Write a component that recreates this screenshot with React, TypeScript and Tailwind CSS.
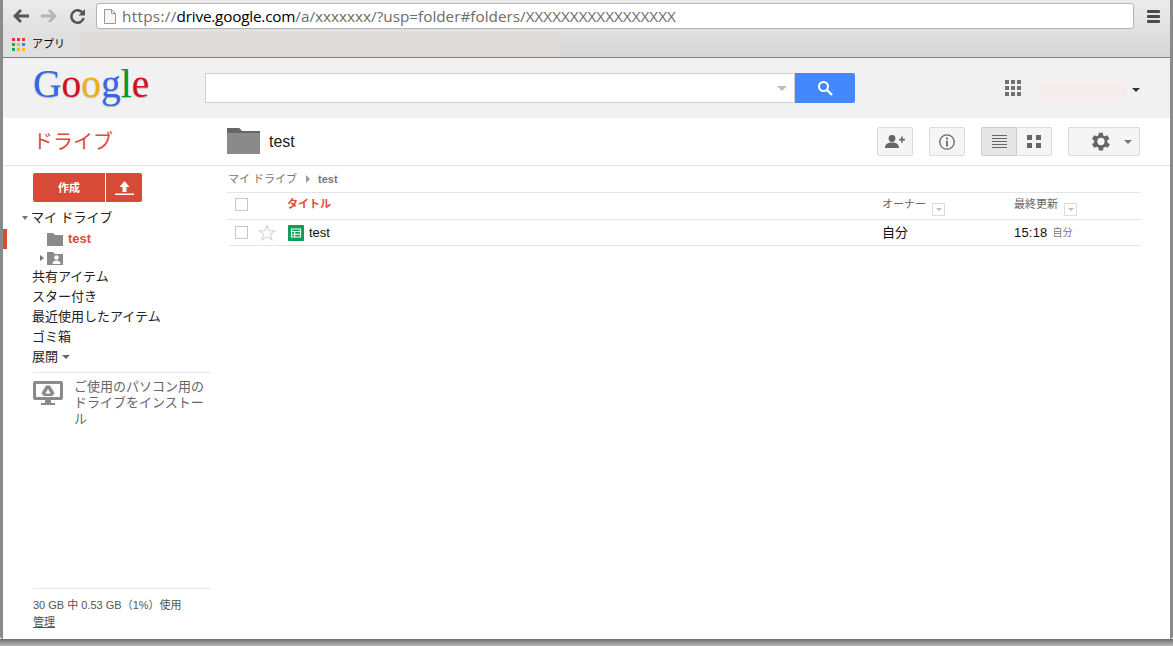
const font = { fontFamily: '"Liberation Sans", "Noto Sans CJK JP", sans-serif' };

function Caret({ className }: { className: string }) {
  return <span className={`inline-block h-0 w-0 border-x-[4px] border-t-[4px] border-x-transparent ${className}`} />;
}

function ChromeBar() {
  return (
    <div className="h-[58px] shrink-0 border-b border-[#7f7f7f] bg-gradient-to-b from-[#ececec] to-[#d6d6d6]">
      <div className="flex h-[32px] items-center pl-[9px] pr-[10px]">
        <svg width="18" height="16" viewBox="0 0 18 16" className="mr-[10px]">
          <path d="M9 2 3 8l6 6M3.500 8H17" fill="none" stroke="#555" strokeWidth="2.800" />
        </svg>
        <svg width="18" height="16" viewBox="0 0 18 16" className="mr-[11px]">
          <path d="m9 2 6 6-6 6M14.500 8H1" fill="none" stroke="#b4b4b4" strokeWidth="2.800" />
        </svg>
        <svg width="17" height="17" viewBox="0 0 17 17" className="mr-[10px]">
          <path d="M14 5.500A6.200 6.200 0 1 0 14.600 10" fill="none" stroke="#555" strokeWidth="2.600" />
          <path d="M16 1v6.500H9.500z" fill="#555" />
        </svg>
        <div
          className="flex h-[26px] flex-1 items-center rounded-[3px] border border-[#b4b4b4] bg-white pl-[7px] text-[15.3px] text-[#6b6b6b]"
          style={{ fontFamily: '"Open Sans", sans-serif' }}
        >
          <svg width="12" height="15" viewBox="0 0 12 15" className="mr-[6px]">
            <path d="M.5.500h7l4 4v10H.5z" fill="#f6f6f6" stroke="#999" />
            <path d="M7.500.500v4h4" fill="none" stroke="#999" />
          </svg>
          <span>
            <span className="tracking-[0.3px]">https://</span>
            <span className="tracking-[-0.2px] text-black">drive.google.com</span>/a/xxxxxxx/?usp=folder#folders/XXXXXXXXXXXXXXXXX
          </span>
        </div>
        <div className="ml-[13px] flex w-[13px] flex-col gap-[2px]">
          <span className="h-[3px] rounded-[1px] bg-[#4a4a4a]" />
          <span className="h-[3px] rounded-[1px] bg-[#4a4a4a]" />
          <span className="h-[3px] rounded-[1px] bg-[#4a4a4a]" />
        </div>
      </div>
      <div className="flex h-[25px] items-stretch">
        <div className="flex w-[77px] items-center bg-[#e0e0e0] pl-[9px] text-[11px] text-black">
          <span className="mr-[7px] grid grid-cols-3 gap-[2px]">
            {['#e33', '#e33', '#e33', '#3a3', '#fb0', '#38e', '#1a5', '#fb0', '#fb0'].map((c, i) => (
              <span key={i} className="h-[3px] w-[3px]" style={{ backgroundColor: c }} />
            ))}
          </span>
          アプリ
        </div>
        <div className="w-[480px] bg-[#dedbd9]" />
      </div>
    </div>
  );
}

function GoogleHeader() {
  return (
    <div className="flex h-[60px] shrink-0 items-start bg-[#f1f1f1]">
      <div
        className="ml-[30px] w-[172px] text-[39.5px] leading-[52px] [text-shadow:0_1px_1px_rgba(0,0,0,0.25)]"
        style={{ fontFamily: '"Liberation Serif", serif' }}
      >
        <span className="text-[#3369e8]">G</span>
        <span className="text-[#d50f25]">o</span>
        <span className="text-[#eeb211]">o</span>
        <span className="text-[#3369e8]">g</span>
        <span className="text-[#009925]">l</span>
        <span className="text-[#d50f25]">e</span>
      </div>
      <div className="mt-[15px] flex h-[30px] w-[650px]">
        <div className="flex flex-1 items-center justify-end border border-[#d0d0d0] bg-white pr-[7px]">
          <Caret className="border-t-[#bdbdbd] !border-x-[5px] !border-t-[5px]" />
        </div>
        <div className="flex w-[60px] items-center justify-center rounded-r-[2px] bg-[#4387fd]">
          <svg width="16" height="16" viewBox="0 0 16 16">
            <circle cx="6.500" cy="6.500" r="4.500" fill="none" stroke="#fff" strokeWidth="2" />
            <path d="m10 10 5 5" stroke="#fff" strokeWidth="2.400" />
          </svg>
        </div>
      </div>
      <div className="ml-[150px] mt-[22px] grid grid-cols-3 gap-[2px]">
        {Array.from({ length: 9 }).map((_, i) => (
          <span key={i} className="h-[4px] w-[4px] bg-[#707070]" />
        ))}
      </div>
      <div className="ml-[19px] mt-[24px] h-[17px] w-[87px] bg-[#f5edeb]" />
      <Caret className="ml-[5px] mt-[30px] border-t-[#333]" />
    </div>
  );
}

function ToolButton({ children, className }: { children: React.ReactNode; className: string }) {
  return (
    <div className={`flex h-[29px] items-center justify-center rounded-[2px] border border-[#dcdcdc] bg-[#f5f5f5] ${className}`}>
      {children}
    </div>
  );
}

function ActionBar() {
  return (
    <div className="flex h-[48px] shrink-0 items-center border-b border-[#e5e5e5] bg-white">
      <div className="w-[224px] pl-[30px] text-[20px] text-[#dd4b39]">ドライブ</div>
      <svg width="33" height="26" viewBox="0 0 33 26" className="mb-[2px]">
        <path d="M0 0h12l3 3h18v23H0z" fill="#8a8a8a" />
        <path d="M0 0h12l3 3h18v2H0z" fill="#666" />
      </svg>
      <span className="ml-[9px] flex-1 text-[16px] text-[#222]">test</span>
      <ToolButton className="w-[36px]">
        <svg width="20" height="13" viewBox="0 0 20 13" fill="#666">
          <circle cx="7" cy="3.500" r="3.400" />
          <path d="M0 13c0-4 3-5.500 7-5.500s7 1.500 7 5.500zM14 3.800h2.200V1.500h1.600v2.300H20v1.600h-2.200v2.300h-1.600V5.400H14z" />
        </svg>
      </ToolButton>
      <ToolButton className="ml-[16px] w-[36px]">
        <svg width="16" height="16" viewBox="0 0 16 16">
          <circle cx="8" cy="8" r="7.200" fill="none" stroke="#666" strokeWidth="1.300" />
          <path d="M7.100 3.600h1.800v1.800H7.100zM7.100 6.700h1.800v5.700H7.100z" fill="#666" />
        </svg>
      </ToolButton>
      <div className="ml-[16px] flex">
        <ToolButton className="w-[36px] !rounded-r-none !border-[#ccc] !bg-[#e6e6e6]">
          <div className="flex w-[15px] flex-col gap-[2px]">
            {[0, 1, 2, 3, 4].map((i) => (
              <span key={i} className="h-px bg-[#666]" />
            ))}
          </div>
        </ToolButton>
        <ToolButton className="w-[35px] !rounded-l-none !border-l-0">
          <div className="grid grid-cols-2 gap-x-[4px] gap-y-[3px]">
            {[0, 1, 2, 3].map((i) => (
              <span key={i} className="h-[5px] w-[5px] bg-[#666]" />
            ))}
          </div>
        </ToolButton>
      </div>
      <ToolButton className="ml-[16px] mr-[30px] w-[72px] gap-[12px] pl-[10px]">
        <svg width="25" height="25" viewBox="0 0 24 24" fill="#666">
          <path d="M19.400 13c.1-.3.1-.7.1-1s0-.7-.1-1l2.100-1.600-2-3.500-2.500 1c-.5-.4-1.100-.7-1.700-1L15.400 3.500h-4L11 6c-.6.300-1.200.6-1.700 1l-2.500-1-2 3.500L6.900 11c-.1.300-.1.700-.1 1s0 .7.100 1l-2.100 1.600 2 3.500 2.500-1c.5.4 1.100.7 1.700 1l.4 2.600h4l.4-2.600c.6-.3 1.200-.6 1.700-1l2.500 1 2-3.500zM13.400 15.500a3.500 3.500 0 1 1 0-7 3.500 3.500 0 0 1 0 7z" />
        </svg>
        <Caret className="border-t-[#777]" />
      </ToolButton>
    </div>
  );
}

function Sidebar() {
  return (
    <div className="flex w-[224px] shrink-0 flex-col text-[13px] leading-[20px] text-[#222]">
      <div className="ml-[30px] mt-[7px] flex h-[29px] gap-px text-white">
        <div className="flex w-[72px] items-center justify-center rounded-l-[2px] bg-[#d84a38] text-[11px] font-bold">作成</div>
        <div className="flex w-[36px] items-center justify-center rounded-r-[2px] bg-[#d84a38]">
          <svg width="19" height="15" viewBox="0 0 19 15" fill="#fff">
            <path d="M9.500 1 14.500 7h-3v5h-4V7h-3zM0 13.500h19V15H0z" />
          </svg>
        </div>
      </div>
      <div className="mt-[6px] flex h-[20px] items-center pl-[19px]">
        <Caret className="mr-[3px] !border-x-[3px] border-t-[#777]" />
        マイ ドライブ
      </div>
      <div className="mt-[1px] flex h-[20px] items-center border-l-[4px] border-[#dd4b39] pl-[40px] font-bold text-[#dd4b39]">
        <svg width="16" height="13" viewBox="0 0 16 13" className="mr-[5px]">
          <path d="M0 0h6l2 2h8v11H0z" fill="#8a8a8a" />
        </svg>
        test
      </div>
      <div className="flex h-[18px] items-center pl-[37px]">
        <span className="mr-[3px] h-0 w-0 border-y-[3px] border-l-[4px] border-y-transparent border-l-[#777]" />
        <svg width="16" height="13" viewBox="0 0 16 13">
          <path d="M0 0h6l2 2h8v11H0z" fill="#8a8a8a" />
          <circle cx="9.500" cy="5.500" r="2.300" fill="#fff" />
          <path d="M5.500 12c0-2.800 1.800-3.500 4-3.500s4 .7 4 3.500z" fill="#fff" />
        </svg>
      </div>
      <div className="ml-[29px] h-[20px]">共有アイテム</div>
      <div className="ml-[29px] h-[20px]">スター付き</div>
      <div className="ml-[29px] h-[20px]">最近使用したアイテム</div>
      <div className="ml-[29px] h-[20px]">ゴミ箱</div>
      <div className="ml-[29px] flex h-[20px] items-center">
        展開
        <Caret className="ml-[4px] border-t-[#666]" />
      </div>
      <div className="ml-[30px] mt-[5px] flex w-[178px] border-t border-[#e5e5e5] pt-[6px] text-[13px] leading-[16px] text-[#666]">
        <svg width="30" height="24" viewBox="0 0 30 24" className="mt-[2px] shrink-0">
          <rect x="0" y="0" width="30" height="19" rx="2" fill="#8a8a8a" />
          <rect x="3" y="3" width="24" height="13" fill="#fff" />
          <path d="M13 4.500h4l4.500 7.500-2 3h-9l-2-3z" fill="#8a8a8a" />
          <path d="m15 8-2.500 4.500h5z" fill="#fff" />
          <path d="M12 19h6v3h-6zM8 22h14v2H8z" fill="#8a8a8a" />
        </svg>
        <div className="ml-[11px] w-[131px] break-all">ご使用のパソコン用のドライブをインストール</div>
      </div>
      <div className="ml-[30px] mb-[8px] mt-auto w-[178px] border-t border-[#e5e5e5] pt-[8px] text-[11px] leading-[17px] text-[#555]">
        <div>30 GB 中 0.53 GB（1%）使用</div>
        <div className="underline">管理</div>
      </div>
    </div>
  );
}

function FileList() {
  return (
    <div className="mr-[30px] flex flex-1 flex-col">
      <div className="flex h-[26px] items-center pl-[1px] text-[11px] text-[#777]">
        マイ ドライブ
        <span className="ml-[9px] mr-[8px] h-0 w-0 border-y-[4px] border-l-[4px] border-y-transparent border-l-[#999]" />
        <span className="font-bold">test</span>
      </div>
      <div className="flex h-[28px] items-center border-y border-[#e5e5e5] pb-[3px] text-[11px]">
        <span className="ml-[8px] h-[13px] w-[13px] border border-[#c6c6c6]" />
        <span className="ml-[39px] w-[595px] font-bold text-[#dd4b39]">タイトル</span>
        <span className="w-[50px] text-[#666]">オーナー</span>
        <span className="flex h-[13px] w-[13px] translate-y-[5px] items-center justify-center border border-[#dcdcdc]">
          <Caret className="!border-x-[3px] !border-t-[3px] border-t-[#bbb]" />
        </span>
        <span className="ml-[69px] w-[50px] text-[#666]">最終更新</span>
        <span className="flex h-[13px] w-[13px] translate-y-[5px] items-center justify-center border border-[#dcdcdc]">
          <Caret className="!border-x-[3px] !border-t-[3px] border-t-[#bbb]" />
        </span>
      </div>
      <div className="ml-[2px] flex h-[26px] items-center border-b border-[#e5e5e5] text-[13px] text-[#111]">
        <span className="ml-[6px] h-[13px] w-[13px] border border-[#c6c6c6]" />
        <svg width="18" height="18" viewBox="0 0 16 16" className="ml-[10px]">
          <path d="M8 1.500 10 6h4.800l-3.800 3 1.400 5L8 11.200 3.600 14 5 9 1.200 6H6z" fill="none" stroke="#d5d5d5" />
        </svg>
        <svg width="16" height="16" viewBox="0 0 16 16" className="ml-[12px]">
          <rect width="16" height="16" rx="1" fill="#0f9d58" />
          <path d="M3.500 4h9v8h-9zM3.500 6.500h9M3.500 9.300h9M6.700 6.500V12" fill="none" stroke="#fff" strokeWidth="1.100" />
        </svg>
        <span className="ml-[5px] w-[573px]">test</span>
        <span className="w-[132px]">自分</span>
        <span className="tracking-[0.2px]">15:18</span>
        <span className="ml-[5px] text-[10px] text-[#777]">自分</span>
      </div>
    </div>
  );
}

export default function App() {
  return (
    <div className="flex h-[646px] w-[1173px] flex-col overflow-hidden bg-white" style={font}>
      <div className="flex h-[639px] w-[1173px] shrink-0 flex-col overflow-hidden rounded-b-[3px] border-x-[3px] border-[#8a8a8a] bg-white">
        <ChromeBar />
        <GoogleHeader />
        <ActionBar />
        <div className="flex min-h-0 flex-1">
          <Sidebar />
          <FileList />
        </div>
      </div>
      <div className="flex-1 bg-gradient-to-b from-[#6e6e6e] to-[#b8b8b8]" />
    </div>
  );
}
